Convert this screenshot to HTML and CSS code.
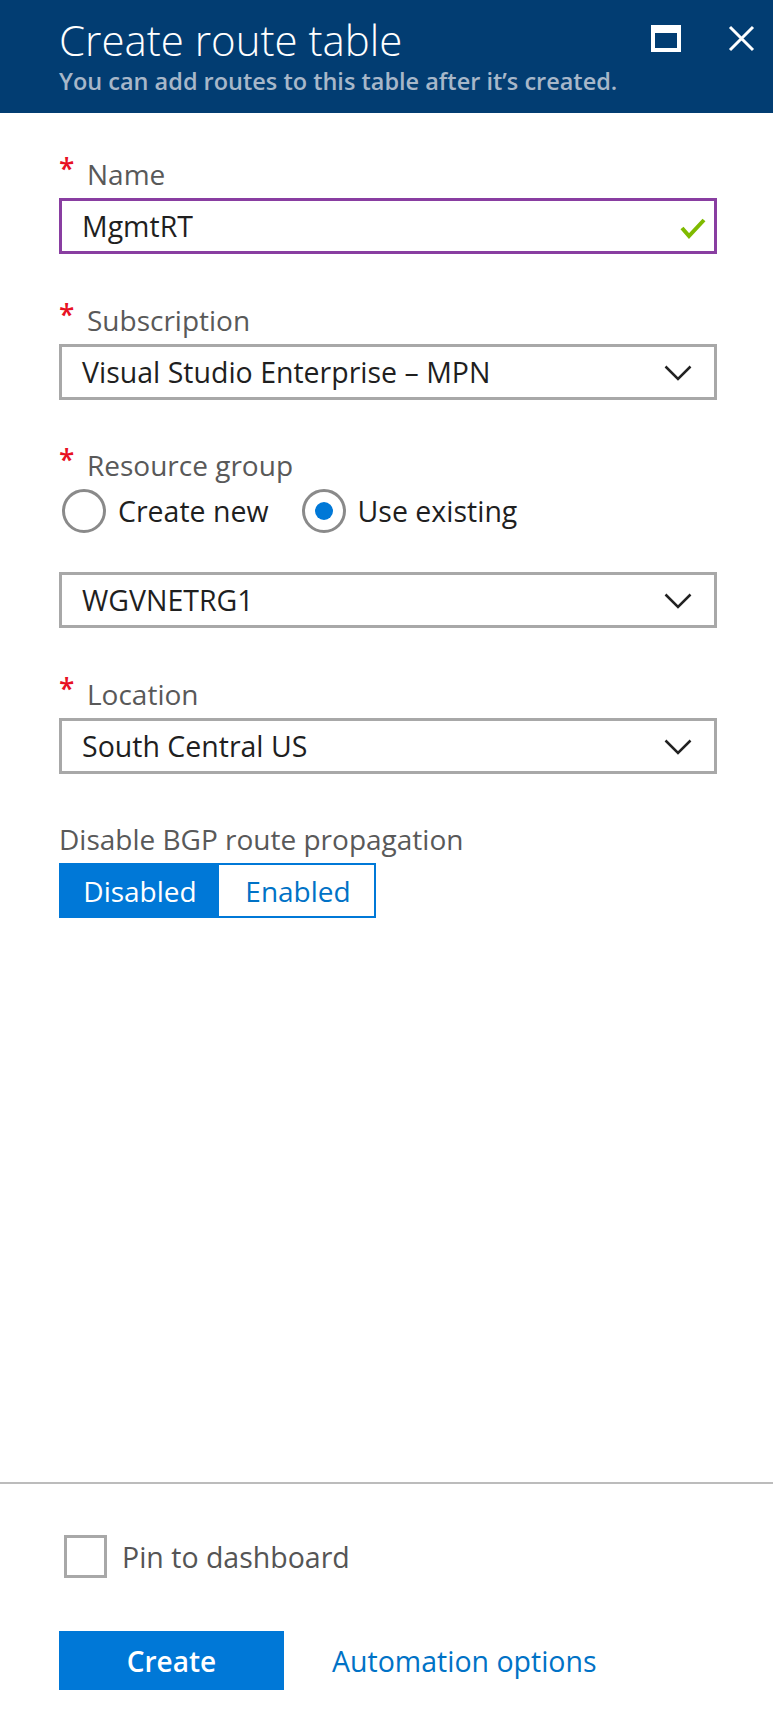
FILE: index.html
```html
<!DOCTYPE html>
<html lang="en">
<head>
<meta charset="utf-8">
<title>Create route table</title>
<link rel="stylesheet" href="styles.css">
</head>
<body>
<div class="blade">
  <header class="blade-header">
    <div class="titles">
      <h1 class="title">Create route table</h1>
      <p class="subtitle">You can add routes to this table after it’s created.</p>
    </div>
    <div class="header-actions">
      <span class="icon-max"></span>
      <svg class="icon-close" width="27" height="27" viewBox="0 0 27 27"><path d="M2 2 L25 25 M25 2 L2 25" stroke="#fff" stroke-width="3" fill="none"/></svg>
    </div>
  </header>

  <main class="form">
    <div class="field">
      <label class="label"><span class="req">*</span>Name</label>
      <div class="input input-valid">
        <span class="value">MgmtRT</span>
        <svg class="check" width="26" height="22" viewBox="0 0 26 22"><path d="M2 11 L9 19 L24 3" stroke="#7fba00" stroke-width="4" fill="none"/></svg>
      </div>
    </div>

    <div class="field">
      <label class="label"><span class="req">*</span>Subscription</label>
      <div class="input select">
        <span class="value">Visual Studio Enterprise – MPN</span>
        <svg class="chev" width="28" height="16" viewBox="0 0 28 16"><path d="M1.5 1.5 L14 14 L26.5 1.5" stroke="#222" stroke-width="2.5" fill="none"/></svg>
      </div>
    </div>

    <div class="field">
      <label class="label"><span class="req">*</span>Resource group</label>
      <div class="radios">
        <span class="radio"><span class="circle"></span>Create new</span>
        <span class="radio"><span class="circle on"></span>Use existing</span>
      </div>
      <div class="input select">
        <span class="value">WGVNETRG1</span>
        <svg class="chev" width="28" height="16" viewBox="0 0 28 16"><path d="M1.5 1.5 L14 14 L26.5 1.5" stroke="#222" stroke-width="2.5" fill="none"/></svg>
      </div>
    </div>

    <div class="field">
      <label class="label"><span class="req">*</span>Location</label>
      <div class="input select">
        <span class="value">South Central US</span>
        <svg class="chev" width="28" height="16" viewBox="0 0 28 16"><path d="M1.5 1.5 L14 14 L26.5 1.5" stroke="#222" stroke-width="2.5" fill="none"/></svg>
      </div>
    </div>

    <div class="field">
      <label class="label plain">Disable BGP route propagation</label>
      <div class="toggle">
        <span class="opt opt-on">Disabled</span>
        <span class="opt">Enabled</span>
      </div>
    </div>
  </main>

  <footer class="footer">
    <div class="pin"><span class="box"></span>Pin to dashboard</div>
    <div class="actions">
      <button class="btn-primary">Create</button>
      <a class="link">Automation options</a>
    </div>
  </footer>
</div>
</body>
</html>
```

FILE: styles.css
```css
* { box-sizing: border-box; }
html, body { margin: 0; padding: 0; background: #fff; }
body { font-family: "Open Sans", "Noto Sans", sans-serif; }

.blade {
  width: 773px;
  min-height: 1725px;
  display: flex;
  flex-direction: column;
}

.blade-header {
  background: #023d72;
  height: 113px;
  padding: 0 18px 0 59px;
  display: flex;
  justify-content: space-between;
  align-items: flex-start;
}
.title {
  margin: 15px 0 0;
  font-weight: 300;
  font-size: 42px;
  line-height: 50px;
  color: #fff;
  white-space: nowrap;
}
.subtitle {
  margin: 0;
  font-size: 23.5px;
  line-height: 33px;
  font-weight: 600;
  color: #a7b7c9;
  white-space: nowrap;
}
.header-actions {
  display: flex;
  align-items: center;
  gap: 47px;
  margin-top: 25px;
}
.icon-max {
  width: 30px;
  height: 27px;
  border: 4px solid #fff;
  border-top-width: 8px;
}

.form {
  flex: 1;
  padding: 46px 56px 0 59px;
}
.field { margin-bottom: 50.5px; }
.label {
  display: block;
  font-size: 28px;
  line-height: 30px;
  color: #595959;
  margin-bottom: 9px;
  position: relative;
  padding-left: 28px;
  white-space: nowrap;
}
.label.plain { padding-left: 0; }
.req {
  position: absolute;
  left: 0;
  top: -6px;
  color: #e81123;
  font-size: 28px;
  font-weight: 600;
}
.input {
  height: 56px;
  border: 3px solid #a8a8a8;
  display: flex;
  align-items: center;
  justify-content: space-between;
  padding: 0 22px 0 20px;
  font-size: 28.5px;
  color: #1f1f1f;
}
.input-valid { border-color: #893ea1; padding-right: 8px; }
.check { margin-top: 4px; }
.chev { margin-top: 2px; }

.radios {
  display: flex;
  align-items: center;
  gap: 33px;
  height: 44px;
  margin-bottom: 39px;
  font-size: 28.5px;
  color: #1f1f1f;
  padding-left: 3px;
}
.radio { display: flex; align-items: center; gap: 12px; }
.circle {
  width: 44px;
  height: 44px;
  border-radius: 50%;
  border: 3px solid #8a8a8a;
  display: flex;
  align-items: center;
  justify-content: center;
}
.circle.on::after {
  content: "";
  width: 18px;
  height: 18px;
  border-radius: 50%;
  background: #0078d7;
}

.toggle {
  display: flex;
  width: 317px;
  height: 55px;
  border: 2px solid #0078d7;
}
.opt {
  flex: 0 0 158px;
  display: flex;
  align-items: center;
  justify-content: center;
  font-size: 28px;
  color: #0072c6;
}
.opt-on { background: #0078d7; color: #fff; }

.footer {
  border-top: 2px solid #bcbcbc;
  padding: 51px 0 35px 59px;
}
.pin {
  display: flex;
  align-items: center;
  gap: 15px;
  font-size: 28.5px;
  color: #555;
  padding-left: 5px;
}
.box {
  width: 43px;
  height: 43px;
  border: 3px solid #a8a8a8;
}
.actions {
  margin-top: 53px;
  display: flex;
  align-items: center;
  gap: 48px;
}
.btn-primary {
  width: 225px;
  height: 59px;
  background: #0078d7;
  border: none;
  color: #fff;
  font-family: inherit;
  font-size: 28px;
  font-weight: 600;
}
.link {
  color: #0072c6;
  font-size: 28.5px;
}
```
